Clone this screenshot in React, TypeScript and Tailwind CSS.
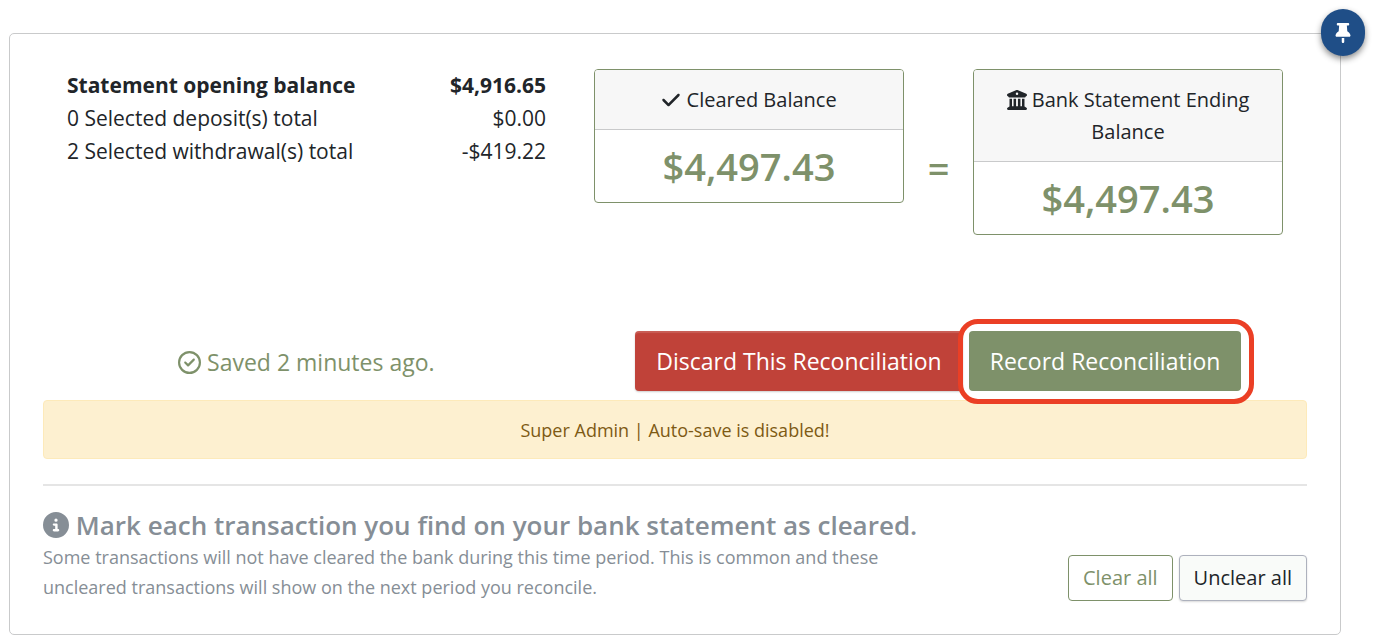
import type { ReactNode } from "react";
import {
  FaBuildingColumns,
  FaCheck,
  FaCircleInfo,
  FaRegCircleCheck,
  FaThumbtack,
} from "react-icons/fa6";

const totals = [
  { label: "Statement opening balance", amount: "$4,916.65", strong: true },
  { label: "0 Selected deposit(s) total", amount: "$0.00", strong: false },
  { label: "2 Selected withdrawal(s) total", amount: "-$419.22", strong: false },
];

function BalanceCard({ title, amount }: { title: ReactNode; amount: string }) {
  return (
    <section className="w-[310px] shrink-0 overflow-hidden rounded-sm border border-[#7e916a] text-center">
      <h2 className="border-b border-[#c9cacb] bg-[#f7f7f7] px-5 pt-3.5 pb-[13px] text-xl leading-8">
        {title}
      </h2>
      <p className="py-3 text-[38px] leading-12 font-semibold text-[#7e916a]">{amount}</p>
    </section>
  );
}

export default function App() {
  return (
    <main className="bg-white pt-[33px] pr-[35px] pb-[9px] pl-[9px] font-['Open_Sans',sans-serif] text-[#212529]">
      <div className="relative rounded-[5px] border border-[#c9cacb] px-[33px] pt-[35px] pb-8">
        <button
          type="button"
          aria-label="Pin panel"
          className="absolute -top-[25px] -right-[25px] flex h-[47px] w-11 items-center justify-center rounded-full bg-[#1f4e87] text-white shadow-[0_3px_6px_rgba(0,0,0,0.45)]"
        >
          <FaThumbtack className="size-5" />
        </button>

        <div className="flex items-start px-6">
          <div className="mr-12 flex-1">
            <table className="w-full text-[21px] leading-[33px]">
              <tbody>
                {totals.map((row) => (
                  <tr key={row.label} className={row.strong ? "font-bold" : "font-normal"}>
                    <td>{row.label}</td>
                    <td className="text-right">{row.amount}</td>
                  </tr>
                ))}
              </tbody>
            </table>
          </div>
          <BalanceCard
            title={
              <>
                <FaCheck className="inline size-5 align-[-3px]" /> Cleared Balance
              </>
            }
            amount="$4,497.43"
          />
          <div className="w-[69px] shrink-0 self-center pt-8 text-center text-[38px] leading-12 font-semibold text-[#7e916a]">
            =
          </div>
          <BalanceCard
            title={
              <>
                <FaBuildingColumns className="inline size-5 align-[-3px]" /> Bank Statement Ending
                Balance
              </>
            }
            amount="$4,497.43"
          />
        </div>

        <div className="mt-24 grid grid-cols-12 items-center">
          <p className="col-span-5 pt-0.5 text-center text-[23px] text-[#7e916a]">
            <FaRegCircleCheck className="inline size-[23px] align-[-3px]" /> Saved 2 minutes ago.
          </p>
          <div className="col-span-7 flex justify-center gap-1.5">
            <button
              type="button"
              className="h-[60px] rounded-sm bg-[#c04239] px-[21px] text-[23px] text-white shadow-[inset_0_2px_1px_rgba(255,255,255,0.15),0_1px_2px_rgba(0,0,0,0.2)]"
            >
              Discard This Reconciliation
            </button>
            <div className="relative">
              <button
                type="button"
                className="h-[60px] rounded-sm bg-[#7e916a] px-[21px] text-[23px] text-white"
              >
                Record Reconciliation
              </button>
              <span className="pointer-events-none absolute -top-3 -right-[13px] -bottom-[13px] -left-[11px] rounded-[20px] border-[5px] border-[#eb3f25]" />
            </div>
          </div>
        </div>

        <p
          role="status"
          className="mt-[9px] rounded-sm border border-[#fdeaba] bg-[#fdf0d0] pt-[15px] pb-[13px] text-center text-lg leading-[29px] text-[#7d5a14]"
        >
          Super Admin | Auto-save is disabled!
        </p>

        <hr className="mt-[25px] mb-[23px] border-t-2 border-[#e5e5e5]" />

        <div className="flex items-end justify-between">
          <div className="w-[880px] text-[#868e96]">
            <h1 className="mb-px text-[26px] leading-8 font-semibold">
              <FaCircleInfo className="inline size-[26px] align-[-3px]" /> Mark each transaction you
              find on your bank statement as cleared.
            </h1>
            <p className="text-lg leading-[30px]">
              Some transactions will not have cleared the bank during this time period. This is
              common and these uncleared transactions will show on the next period you reconcile.
            </p>
          </div>
          <div className="mb-px flex shrink-0 gap-1.5">
            <button
              type="button"
              className="h-[46px] rounded-sm border border-[#7e916a] bg-white px-3.5 text-xl text-[#7e916a]"
            >
              Clear all
            </button>
            <button
              type="button"
              className="h-[46px] rounded-sm border border-[#adb1bd] bg-[#f9fbf9] px-3.5 text-xl shadow-[0_1px_2px_rgba(0,0,0,0.15)]"
            >
              Unclear all
            </button>
          </div>
        </div>
      </div>
    </main>
  );
}
